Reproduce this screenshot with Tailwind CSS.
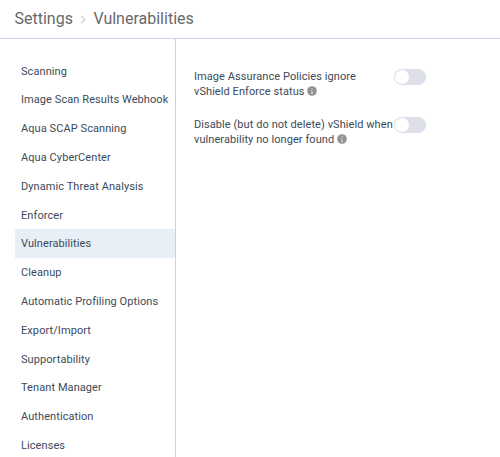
<!DOCTYPE html>
<html lang="en">
<head>
<meta charset="utf-8">
<title>Settings</title>
<script src="https://cdn.jsdelivr.net/npm/@tailwindcss/browser@4"></script>
</head>
<body class="h-[457px] w-[500px] overflow-hidden bg-white font-['Roboto',sans-serif] text-[#3c4a58]">
<div class="flex h-full flex-col">
<header class="flex h-[39px] shrink-0 items-center border-b border-[#c9d3e3] pl-[14.5px] text-[16px] text-[#686868]">
<span>Settings</span>
<svg class="mr-[7px] ml-[7.5px] h-[9px] w-[6px]" viewBox="0 0 6 9" fill="none" stroke="#cfd3dc" stroke-width="1.4"><path d="M1 .7l3.8 3.8L1 8.3"/></svg>
<span>Vulnerabilities</span>
</header>
<div class="flex min-h-0 grow">
<nav class="w-[176px] shrink-0 overflow-hidden border-r border-[#c9d3e0] pt-[17.4px] pl-[15px] text-[11px] tracking-[0.08px] whitespace-nowrap">
<a class="flex h-[28.8px] items-center pt-[2px] pl-[6px]">Scanning</a>
<a class="flex h-[28.8px] items-center pt-[2px] pl-[6px]">Image Scan Results Webhook</a>
<a class="flex h-[28.8px] items-center pt-[2px] pl-[6px]">Aqua SCAP Scanning</a>
<a class="flex h-[28.8px] items-center pt-[2px] pl-[6px]">Aqua CyberCenter</a>
<a class="flex h-[28.8px] items-center pt-[2px] pl-[6px]">Dynamic Threat Analysis</a>
<a class="flex h-[28.8px] items-center pt-[2px] pl-[6px]">Enforcer</a>
<a class="flex h-[28.8px] items-center bg-[#e8eff7] pt-[2px] pl-[6px]">Vulnerabilities</a>
<a class="flex h-[28.8px] items-center pt-[2px] pl-[6px]">Cleanup</a>
<a class="flex h-[28.8px] items-center pt-[2px] pl-[6px]">Automatic Profiling Options</a>
<a class="flex h-[28.8px] items-center pt-[2px] pl-[6px]">Export/Import</a>
<a class="flex h-[28.8px] items-center pt-[2px] pl-[6px]">Supportability</a>
<a class="flex h-[28.8px] items-center pt-[2px] pl-[6px]">Tenant Manager</a>
<a class="flex h-[28.8px] items-center pt-[2px] pl-[6px]">Authentication</a>
<a class="flex h-[28.8px] items-center pt-[2px] pl-[6px]">Licenses</a>
</nav>
<main class="flex flex-col gap-[18px] pt-[30px] pl-[18px] text-[11px] leading-[15px] tracking-[0.07px]">
<div class="flex">
<div class="w-[200px] whitespace-nowrap">Image Assurance Policies ignore<br><span class="flex items-center gap-[2.5px]">vShield Enforce status<svg class="mb-[2px] h-[10px] w-[10px]" viewBox="0 0 10 10"><circle cx="5" cy="5" r="4.8" fill="#929292"/><path d="M5 2v1.3M4.2 4.5H5v3M4 7.5h2" stroke="#d4d4d4" fill="none"/></svg></span></div>
<span class="flex h-4 w-8 items-center rounded-full bg-[#dcdfe7] p-[1px]"><i class="h-[14px] w-[14px] rounded-full bg-white"></i></span>
</div>
<div class="flex">
<div class="w-[200px] whitespace-nowrap">Disable (but do not delete) vShield when<br><span class="flex items-center gap-[2.5px]">vulnerability no longer found<svg class="mb-[2px] h-[10px] w-[10px]" viewBox="0 0 10 10"><circle cx="5" cy="5" r="4.8" fill="#929292"/><path d="M5 2v1.3M4.2 4.5H5v3M4 7.5h2" stroke="#d4d4d4" fill="none"/></svg></span></div>
<span class="flex h-4 w-8 items-center rounded-full bg-[#dcdfe7] p-[1px]"><i class="h-[14px] w-[14px] rounded-full bg-white"></i></span>
</div>
</main>
</div>
</div>
</body>
</html>
